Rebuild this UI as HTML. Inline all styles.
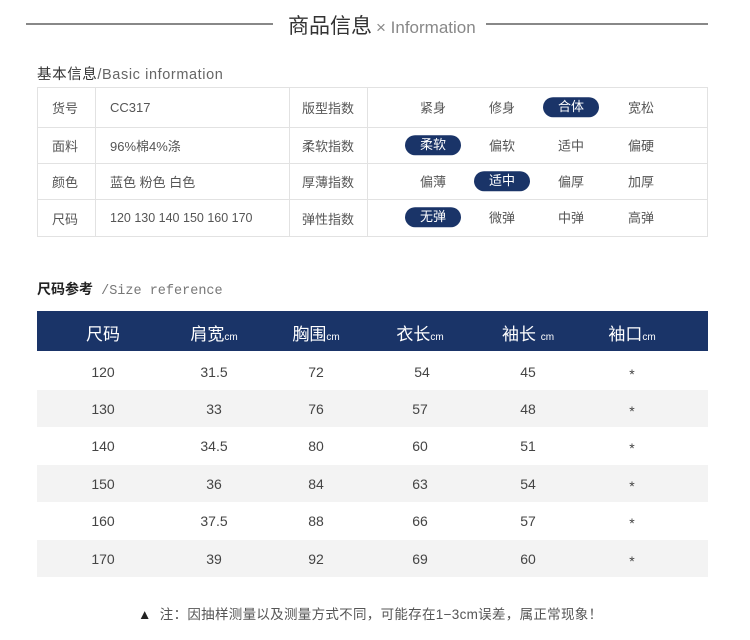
<!DOCTYPE html>
<html><head><meta charset="utf-8"><style>
*{margin:0;padding:0;box-sizing:border-box}
body{width:750px;height:640px;background:#fff;font-family:"Liberation Sans","Noto Sans CJK SC",sans-serif;color:#444;position:relative;overflow:hidden}
.a{position:absolute}
.line{position:absolute;height:2px;background:#888;top:23px}
.t{font-size:13px;color:#555;white-space:nowrap}
table.b{position:absolute;left:37px;top:87px;width:671px;border-collapse:collapse}
table.b td{border:1px solid #e2e2e2;font-size:13px;color:#555;padding:0}
.pill{display:inline-block;width:56px;height:20px;line-height:20px;border-radius:10px;text-align:center}
.opt{position:absolute;top:50%;transform:translate(-50%,-54%);font-size:13px;color:#555}
.opt.on{background:#1a3468;color:#fff}
.hd{position:absolute;left:37px;top:311px;width:671px;height:40px;background:#1a3468}
.row{position:absolute;left:37px;width:671px;height:37px}
.c{position:absolute;transform:translateX(-50%);white-space:nowrap}
</style></head><body>
<div class="line" style="left:26px;width:247px"></div>
<div class="line" style="left:486px;width:222px"></div>
<div class="a" style="left:288px;top:10px;font-size:21px;color:#333;white-space:nowrap">商品信息<span style="font-size:17px;color:#888;margin-left:4px">× Information</span></div>
<div class="a t" style="left:37px;top:63px;color:#333;font-size:14.5px;letter-spacing:0.6px">基本信息<span style="color:#666">/Basic information</span></div>
<table class="b">
<tr style="height:40px"><td style="width:58px;padding-left:14px">货号</td><td style="width:194px;padding-left:14px">CC317</td><td style="width:78px;padding-left:12px">版型指数</td><td style="position:relative"><span class="opt" style="left:65px">紧身</span><span class="opt" style="left:134px">修身</span><span class="opt pill on" style="left:203px">合体</span><span class="opt" style="left:273px">宽松</span></td></tr>
<tr style="height:36px"><td style="padding-left:14px">面料</td><td style="padding-left:14px">96%棉4%涤</td><td style="padding-left:12px">柔软指数</td><td style="position:relative"><span class="opt pill on" style="left:65px">柔软</span><span class="opt" style="left:134px">偏软</span><span class="opt" style="left:203px">适中</span><span class="opt" style="left:273px">偏硬</span></td></tr>
<tr style="height:36px"><td style="padding-left:14px">颜色</td><td style="padding-left:14px">蓝色 粉色 白色</td><td style="padding-left:12px">厚薄指数</td><td style="position:relative"><span class="opt" style="left:65px">偏薄</span><span class="opt pill on" style="left:134px">适中</span><span class="opt" style="left:203px">偏厚</span><span class="opt" style="left:273px">加厚</span></td></tr>
<tr style="height:37px"><td style="padding-left:14px">尺码</td><td style="padding-left:14px;font-size:12.5px">120 130 140 150 160 170</td><td style="padding-left:12px">弹性指数</td><td style="position:relative"><span class="opt pill on" style="left:65px">无弹</span><span class="opt" style="left:134px">微弹</span><span class="opt" style="left:203px">中弹</span><span class="opt" style="left:273px">高弹</span></td></tr>
</table>
<div class="a t" style="left:37px;top:279px;font-size:14px;color:#222;font-weight:bold">尺码参考<span style="font-weight:normal;color:#777;font-family:'Liberation Mono',monospace;font-size:13.5px"> /Size reference</span></div>
<div class="hd">
<div class="c" style="left:66px;top:9px;color:#fff;font-size:17px">尺码</div>
<div class="c" style="left:177px;top:9px;color:#fff;font-size:17px">肩宽<span style="font-size:10px">cm</span></div>
<div class="c" style="left:279px;top:9px;color:#fff;font-size:17px">胸围<span style="font-size:10px">cm</span></div>
<div class="c" style="left:383px;top:9px;color:#fff;font-size:17px">衣长<span style="font-size:10px">cm</span></div>
<div class="c" style="left:491px;top:9px;color:#fff;font-size:17px">袖长 <span style="font-size:10px">cm</span></div>
<div class="c" style="left:595px;top:9px;color:#fff;font-size:17px">袖口<span style="font-size:10px">cm</span></div>
</div>
<div class="row" style="top:353px"></div>
<div class="row" style="top:390px;background:#f3f3f3"></div>
<div class="row" style="top:427px"></div>
<div class="row" style="top:465px;background:#f3f3f3"></div>
<div class="row" style="top:502px"></div>
<div class="row" style="top:540px;background:#f3f3f3"></div>
<div class="c" style="left:103px;top:364px;font-size:14px">120</div><div class="c" style="left:214px;top:364px;font-size:14px">31.5</div><div class="c" style="left:316px;top:364px;font-size:14px">72</div><div class="c" style="left:422px;top:364px;font-size:14px">54</div><div class="c" style="left:528px;top:364px;font-size:14px">45</div><div class="c" style="left:632px;top:366px;font-size:14px">*</div>
<div class="c" style="left:103px;top:401px;font-size:14px">130</div><div class="c" style="left:214px;top:401px;font-size:14px">33</div><div class="c" style="left:316px;top:401px;font-size:14px">76</div><div class="c" style="left:420px;top:401px;font-size:14px">57</div><div class="c" style="left:528px;top:401px;font-size:14px">48</div><div class="c" style="left:632px;top:403px;font-size:14px">*</div>
<div class="c" style="left:103px;top:438px;font-size:14px">140</div><div class="c" style="left:214px;top:438px;font-size:14px">34.5</div><div class="c" style="left:316px;top:438px;font-size:14px">80</div><div class="c" style="left:420px;top:438px;font-size:14px">60</div><div class="c" style="left:528px;top:438px;font-size:14px">51</div><div class="c" style="left:632px;top:440px;font-size:14px">*</div>
<div class="c" style="left:103px;top:476px;font-size:14px">150</div><div class="c" style="left:214px;top:476px;font-size:14px">36</div><div class="c" style="left:316px;top:476px;font-size:14px">84</div><div class="c" style="left:420px;top:476px;font-size:14px">63</div><div class="c" style="left:528px;top:476px;font-size:14px">54</div><div class="c" style="left:632px;top:478px;font-size:14px">*</div>
<div class="c" style="left:103px;top:513px;font-size:14px">160</div><div class="c" style="left:214px;top:513px;font-size:14px">37.5</div><div class="c" style="left:316px;top:513px;font-size:14px">88</div><div class="c" style="left:420px;top:513px;font-size:14px">66</div><div class="c" style="left:528px;top:513px;font-size:14px">57</div><div class="c" style="left:632px;top:515px;font-size:14px">*</div>
<div class="c" style="left:103px;top:551px;font-size:14px">170</div><div class="c" style="left:214px;top:551px;font-size:14px">39</div><div class="c" style="left:316px;top:551px;font-size:14px">92</div><div class="c" style="left:420px;top:551px;font-size:14px">69</div><div class="c" style="left:528px;top:551px;font-size:14px">60</div><div class="c" style="left:632px;top:553px;font-size:14px">*</div>
<div class="a t" style="left:138px;top:603px;font-size:13.5px;color:#555;letter-spacing:0.3px"><span style="color:#222">▲</span>&nbsp; 注：因抽样测量以及测量方式不同，可能存在1−3cm误差，属正常现象！</div>
</body></html>
